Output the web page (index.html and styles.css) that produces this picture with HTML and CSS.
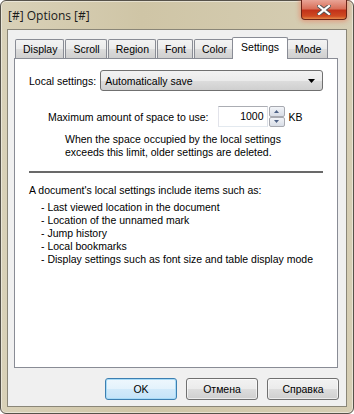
FILE: index.html
```html
<!DOCTYPE html>
<html lang="en">
<head>
    <meta charset="UTF-8">
    <title>Options</title>
    <link rel="stylesheet" href="styles.css">
</head>
<body>
    <div class="window">
        <div class="titlebar">
            <span class="title">[#] Options [#]</span>
            <div class="close-btn">
                <svg width="14" height="10" viewBox="0 0 14 10">
                    <path d="M2 1 L12 9 M12 1 L2 9" stroke="#555" stroke-width="4" stroke-linecap="square"/>
                    <path d="M2 1 L12 9 M12 1 L2 9" stroke="#fff" stroke-width="2.2" stroke-linecap="square"/>
                </svg>
            </div>
        </div>
        <div class="client">
            <div class="tabs">
                <div class="tab">Display</div>
                <div class="tab">Scroll</div>
                <div class="tab">Region</div>
                <div class="tab">Font</div>
                <div class="tab">Color</div>
                <div class="tab active">Settings</div>
                <div class="tab">Mode</div>
            </div>
            <div class="panel">
                <div class="row local-row">
                    <span class="label">Local settings:</span>
                    <div class="combo">
                        <span>Automatically save</span>
                        <svg width="8" height="4" viewBox="0 0 8 4"><path d="M0 0 H7 L3.5 4 Z" fill="#000"/></svg>
                    </div>
                </div>
                <div class="row space-row">
                    <span class="label">Maximum amount of space to use:</span>
                    <div class="spin">
                        <div class="spin-input">1000</div>
                        <div class="spin-btns">
                            <div class="spin-btn"><svg width="5" height="3" viewBox="0 0 5 3"><path d="M0 3 H5 L2.5 0 Z" fill="#4d6185"/></svg></div>
                            <div class="spin-btn"><svg width="5" height="3" viewBox="0 0 5 3"><path d="M0 0 H5 L2.5 3 Z" fill="#4d6185"/></svg></div>
                        </div>
                    </div>
                    <span class="unit">KB</span>
                </div>
                <p class="note">When the space occupied by the local settings<br>exceeds this limit, older settings are deleted.</p>
                <div class="separator"></div>
                <p class="intro">A document's local settings include items such as:</p>
                <ul class="items">
                    <li>- Last viewed location in the document</li>
                    <li>- Location of the unnamed mark</li>
                    <li>- Jump history</li>
                    <li>- Local bookmarks</li>
                    <li>- Display settings such as font size and table display mode</li>
                </ul>
            </div>
            <div class="buttons">
                <div class="btn default">OK</div>
                <div class="btn">Отмена</div>
                <div class="btn">Справка</div>
            </div>
        </div>
    </div>
</body>
</html>
```
FILE: styles.css
```css
body {
    margin: 0;
    background: #fff;
    font-family: "Liberation Sans", Arial, sans-serif;
    font-size: 10.5px;
    color: #000;
}
.window {
    width: 354px;
    height: 414px;
    box-sizing: border-box;
    border: 1px solid #56524a;
    border-radius: 6px;
    background: linear-gradient(90deg, #d9d1b8 0%, #cfc5a6 40%, #d6ceb4 100%);
    box-shadow: inset 0 0 0 1px rgba(255, 255, 255, 0.45);
    display: flex;
    flex-direction: column;
}
.titlebar {
    height: 28px;
    display: flex;
    align-items: flex-start;
    position: relative;
}
.title {
    font-family: "Open Sans", sans-serif;
    font-size: 12px;
    color: #1a1a1a;
    margin: 6px 0 0 7px;
}
.close-btn {
    position: absolute;
    top: -1px;
    right: 6px;
    width: 44px;
    height: 19px;
    border: 1px solid #6b2317;
    border-top: none;
    border-radius: 0 0 4px 4px;
    background: linear-gradient(#e9a496 0%, #d9705a 45%, #c2331a 55%, #cf4a22 85%, #e48a4a 100%);
    box-shadow: 0 0 4px 2px rgba(235, 110, 80, 0.45);
    display: flex;
    align-items: center;
    justify-content: center;
}
.client {
    margin: 0 6px 6px 6px;
    flex: 1;
    border: 1px solid #8a8678;
    background: #f0f0f0;
    display: flex;
    flex-direction: column;
}
.tabs {
    display: flex;
    align-items: flex-end;
    height: 21px;
    margin-top: 7px;
    padding-left: 7px;
}
.tab {
    height: 18px;
    line-height: 18px;
    padding: 0 6px 0 7px;
    border: 1px solid #898c95;
    border-bottom: none;
    border-radius: 2px 2px 0 0;
    background: linear-gradient(#f3f3f3 0%, #ebebeb 50%, #dddddd 50%, #cfcfcf 100%);
    margin-right: 1px;
}
.tab.active {
    height: 21px;
    line-height: 18px;
    margin: 0 -1px -1px -3px;
    padding: 0 8px;
    background: #fff;
    position: relative;
    z-index: 1;
}
.panel {
    margin: 0 8px 0 6px;
    height: 308px;
    border: 1px solid #898c95;
    background: #fff;
}
.row {
    display: flex;
    align-items: center;
}
.local-row {
    margin-top: 11px;
    padding: 0 14px;
}
.local-row .label {
    margin-right: 4px;
}
.combo {
    flex: 1;
    height: 19px;
    border: 1px solid #707070;
    border-radius: 3px;
    background: linear-gradient(#f2f2f2 0%, #ebebeb 50%, #dddddd 50%, #cfcfcf 100%);
    display: flex;
    align-items: center;
    justify-content: space-between;
    padding: 0 6px 0 4px;
}
.space-row {
    margin-top: 15px;
    padding-left: 33px;
}
.space-row .label {
    margin-right: 9px;
}
.spin {
    display: flex;
    height: 21px;
}
.spin-input {
    width: 50px;
    box-sizing: border-box;
    border: 1px solid #abadb3;
    border-color: #abadb3 #dbdfe6 #e3e9ef #e2e3ea;
    text-align: right;
    padding-right: 3px;
    line-height: 19px;
}
.spin-btns {
    display: flex;
    flex-direction: column;
    justify-content: space-between;
    width: 16px;
    padding-left: 1px;
}
.spin-btn {
    height: 9px;
    border: 1px solid #a7a9b0;
    border-radius: 2px;
    background: linear-gradient(#f2f4f8, #d8dde6);
    display: flex;
    align-items: center;
    justify-content: center;
}
.unit {
    margin-left: 4px;
}
.note {
    margin: 6px 0 0 50px;
    line-height: 13px;
}
.separator {
    margin: 12px 14px 0 14px;
    height: 2px;
    background: #696969;
}
.intro {
    margin: 11px 0 0 14px;
    line-height: 13px;
}
.items {
    list-style: none;
    margin: 4px 0 0 26px;
    padding: 0;
    line-height: 13px;
}
.buttons {
    display: flex;
    justify-content: flex-end;
    gap: 9px;
    margin: 10px 7px 0 0;
}
.btn {
    width: 70px;
    height: 20px;
    line-height: 20px;
    text-align: center;
    border: 1px solid #707070;
    border-radius: 3px;
    background: linear-gradient(#f2f2f2 0%, #ebebeb 50%, #dddddd 50%, #cfcfcf 100%);
    box-shadow: inset 0 0 0 1px rgba(255, 255, 255, 0.6);
}
.btn.default {
    border-color: #3c7fb1;
    background: linear-gradient(#eef7fd 0%, #e3f2fc 50%, #d2eafa 50%, #c4e3f8 100%);
    box-shadow: inset 0 0 0 1px #a8dbf7;
}
```
